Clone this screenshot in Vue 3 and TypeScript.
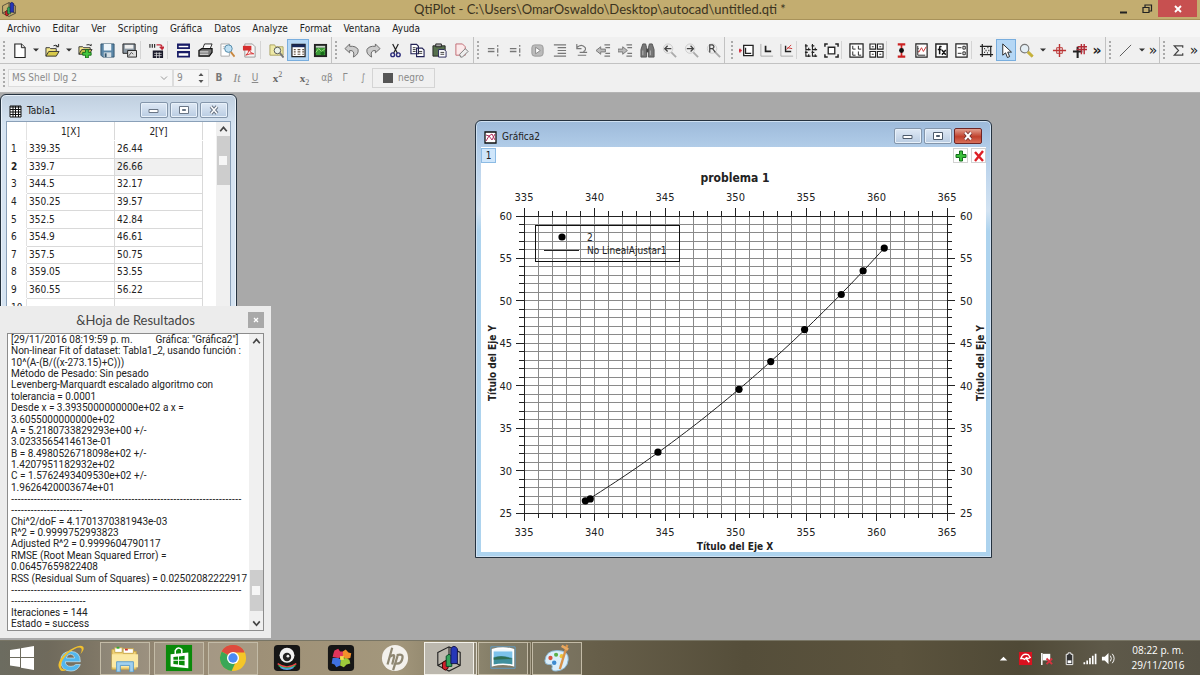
<script setup lang="ts">
import { ref } from 'vue'

interface Tool { id: string; label: string; kind?: 'sep' | 'drop' | 'more'; active?: boolean; disabled?: boolean }

const sep = (id: string): Tool => ({ id, label: '', kind: 'sep' })
const drop = (id: string, label: string): Tool => ({ id, label, kind: 'drop' })
const more = (id: string): Tool => ({ id, label: 'Más herramientas', kind: 'more' })
const tool = (id: string, label: string, active = false): Tool => ({ id, label, active })
const off = (id: string, label: string): Tool => ({ id, label, disabled: true })

const menus = ['Archivo', 'Editar', 'Ver', 'Scripting', 'Gráfica', 'Datos', 'Analyze', 'Format', 'Ventana', 'Ayuda']

const toolGroups: { name: string; tools: Tool[] }[] = [
  {
    name: 'file',
    tools: [
      tool('new', 'Nuevo'), drop('newMenu', 'Opciones de nuevo'), tool('open', 'Abrir'), drop('openMenu', 'Opciones de abrir'),
      tool('append', 'Añadir proyecto'), tool('save', 'Guardar'), tool('template', 'Guardar plantilla'), sep('s1'),
      tool('ascii', 'Importar ASCII'), sep('s2'), tool('duplicate', 'Duplicar'), tool('print', 'Imprimir'),
      tool('preview', 'Vista previa'), tool('pdf', 'Exportar PDF'), sep('s3'), tool('explorer', 'Explorador'),
      tool('results', 'Resultados', true), tool('log', 'Consola'),
    ],
  },
  {
    name: 'edit',
    tools: [
      tool('undo', 'Deshacer'), tool('redo', 'Rehacer'), tool('cut', 'Cortar'), tool('copy', 'Copiar'),
      tool('paste', 'Pegar'), tool('erase', 'Borrar'),
    ],
  },
  {
    name: 'script',
    tools: [
      off('eval', 'Ejecutar'), off('eval2', 'Evaluar'), off('play', 'Ejecutar todo'), off('indent', 'Formato'),
      off('revert', 'Revertir'), off('outdent', 'Reducir sangría'), off('inc', 'Aumentar sangría'), off('find', 'Buscar'),
      off('prev', 'Buscar anterior'), off('next', 'Buscar siguiente'), off('replace', 'Reemplazar'),
    ],
  },
  {
    name: 'plot',
    tools: [
      tool('layer', 'Añadir capa'), tool('axisA', 'Capa inferior'), tool('axisB', 'Capa superior'), sep('s4'),
      tool('arrange', 'Ordenar capas'), tool('extract', 'Extraer'), sep('s5'), tool('graphs', 'Capas'),
      tool('grid4', 'Gráficas'), sep('s6'), tool('errors', 'Barras de error'), tool('curve', 'Curva'),
      tool('fx', 'Función'), tool('legend', 'Leyenda'), sep('s7'), tool('rescale', 'Reescalar'),
      tool('pointer', 'Puntero', true), tool('zoom', 'Ampliar'), drop('zoomMenu', 'Opciones de zoom'),
      tool('cross', 'Lector de datos'), tool('range', 'Seleccionar rango'), more('m1'),
    ],
  },
  { name: 'line', tools: [off('line', 'Línea'), drop('lineMenu', 'Opciones de línea'), more('m2')] },
  { name: 'stat', tools: [off('sigma', 'Suma'), more('m3')] },
]

const G = '#777'
const lens = (c: string) => `<circle cx="6" cy="6" r="4.5" fill="#e4eef4" stroke="${c}" stroke-width="1.2"/><path d="M9.5 9.5l5 5" stroke="#b9a35a" stroke-width="2.4"/>`
const search = (glyph: string) => `<circle cx="6.5" cy="6" r="5" fill="#eee" stroke="#ccc"/><path d="M10 10l5 5" stroke="#aaa" stroke-width="2"/>${glyph}`
const corner = (x: number, y: number) => `<path d="M${x} ${y}v6h5M${x - 1} ${y + 2}h3M${x + 3} ${y + 4}v3" stroke="#222" fill="none" stroke-width="1.200"/>`

const icons: Record<string, string> = {
  new: '<path d="M3 1h7l4 4v10.500H3z" fill="#fff" stroke="#222" stroke-width="1.2"/><path d="M10 1v4h4" fill="#ddd" stroke="#222"/>',
  open: '<path d="M1 14V5h4l1 1h6v3" fill="#f5e88a" stroke="#333"/><path d="M1 14l3-5h11l-3 5z" fill="#d8ca4a" stroke="#333"/><path d="M9 3q3-2 5 1M14.500 1v3h-3" fill="none" stroke="#222"/>',
  append: '<path d="M1 12V4h4l1 1h7v3" fill="#f5e88a" stroke="#333"/><path d="M1 12l3-5h11l-3 5z" fill="#c9c34a" stroke="#333"/><path d="M9 2q3-1 5 1V1" fill="none" stroke="#222"/><path d="M8 7h3v3h3v3h-3v3H8v-3H5v-3h3z" fill="#43c83f" stroke="#176d19"/>',
  save: '<path d="M1 1h14v14H3l-2-2z" fill="#5b87a8" stroke="#31546e"/><path d="M4 1h8v7H4z" fill="#eef5fa"/><path d="M4 10h8v5H4z" fill="#d4dde3"/><path d="M5 11h2v4H5z" fill="#31546e"/>',
  template: '<path d="M1 1h13v10H1z" fill="#8b98a3" stroke="#222"/><path d="M3 2h9v4H3z" fill="#eee"/><path d="M6 8h9.500v7H6z" fill="#ddd" stroke="#222"/><path d="M7 14l3-4 2 2" stroke="#555" fill="none"/>',
  ascii: '<path d="M1 1v4M3.500 1v4M6 1v4" stroke="#222" stroke-width="1.200"/><path d="M8 2h4q2 0 2 4M11.500 4l2.500 2.500L16 4" fill="none" stroke="#c22736" stroke-width="1.500"/><path d="M4 8h11v8H4z" fill="#1a1a2a"/><path d="M5.500 11h8M5.500 13.500h8M8 10v6M11 10v6" stroke="#ddd" stroke-width=".8"/>',
  duplicate: '<path d="M2 1.500h12v4H2zM2 9.500h12v5H2z" fill="#fff" stroke="#181c66" stroke-width="1.800"/><path d="M2 2h12M2 10h12" stroke="#181c66" stroke-width="2"/>',
  print: '<path d="M5 6l2-5h8l-2 5" fill="#fff" stroke="#222"/><path d="M1 8l3-2h11v4l-3 4H1z" fill="#777" stroke="#111" stroke-width="1.300"/><path d="M2 9.500h9M2 12h9M7 3.500h5" stroke="#eee"/>',
  preview: '<path d="M1 1h9v13H1z" fill="#fff" stroke="#aaa"/><path d="M3 4h5M3 6h4" stroke="#bbb"/><circle cx="9" cy="6" r="4" fill="#bfe0f3" stroke="#4f87a8"/><path d="M11.500 9.500l4 5" stroke="#c8873e" stroke-width="2"/>',
  pdf: '<path d="M3 1h8l3 3v11H3z" fill="#f6f6f6" stroke="#999"/><path d="M1 3h9v5H1z" fill="#d62d2d"/><path d="M4 13q3-2 3.500-6 1 4 5 4.500-4-.5-8.500 1.500z" fill="none" stroke="#d62d2d"/>',
  explorer: '<path d="M1 13V2h5l1 2h8v9z" fill="#eee9a6" stroke="#aaa260"/><circle cx="9" cy="8" r="3.500" fill="#e9f1e9" stroke="#555"/><path d="M11.500 10.500l4 5" stroke="#777" stroke-width="2"/>',
  results: '<path d="M1 1.500h14v13H1z" fill="#fff" stroke="#222" stroke-width="1.300"/><path d="M1 3h14" stroke="#16285b" stroke-width="3"/><path d="M3 7h2M7 7h3M12 7h2M3 9.500h2M7 9.500h3M12 9.500h2M3 12h2M7 12h3M12 12h2" stroke="#654" stroke-width="1.200"/>',
  log: '<path d="M1 1h14v14H1z" fill="#222"/><path d="M3 5h10v8H3z" fill="#3b9b38"/><path d="M3 3h10v2H3z" fill="#c8d8c8"/><path d="M3 10l3-4 3 3 4-3" stroke="#9ae07a" fill="none"/><circle cx="10" cy="11" r="2" fill="#176d19"/>',
  undo: '<path d="M6 1L1 6l5 4.500V8q6-.5 4 7 6-3 5-8-2-4-9-3.500z" fill="#ccc" stroke="#666"/>',
  redo: '<path d="M10 1l5 5-5 4.500V8q-6-.5-4 7-6-3-5-8 2-4 9-3.500z" fill="#ccc" stroke="#666"/>',
  cut: '<path d="M5 1l5 10M11 1L6 11" stroke="#222" stroke-width="1.300"/><circle cx="5" cy="12.500" r="2" fill="none" stroke="#2a2a7a" stroke-width="1.500"/><circle cx="11" cy="12.500" r="2" fill="none" stroke="#2a2a7a" stroke-width="1.500"/>',
  copy: '<path d="M1 1.500h6l2 2v8H1zM7 5.500h6l2 2v7H7z" fill="#fff" stroke="#222255" stroke-width="1.200"/><path d="M3 5h3M3 7h3M3 9h3M9 9h4M9 11h4" stroke="#333"/>',
  paste: '<path d="M1 3h13v11H1z" fill="#56704d" stroke="#222"/><path d="M4 1h6v3H4z" fill="#aaa" stroke="#222"/><path d="M7 7h6l2 2v6H7z" fill="#fff" stroke="#222255"/><path d="M9 10h4M9 12h4" stroke="#333"/>',
  erase: '<path d="M2 1h7l3 3v9H2z" fill="#fbe9ea" stroke="#c06a72"/><path d="M6 12l6-6 3 3-6 6H7z" fill="#eee" stroke="#777"/>',
  eval: `<path d="M2 6h7M2 9h7" stroke="${G}" stroke-width="1.500"/><path d="M12.500 2v2M12.500 5.500v5M12.500 12v2" stroke="${G}" stroke-width="1.300"/>`,
  eval2: `<path d="M2 6h7M2 9h7" stroke="${G}" stroke-width="1.500"/><path d="M12.500 2v2M12.500 5.500v5M12.500 12v2" stroke="${G}" stroke-width="1.300"/>`,
  play: '<rect x="2" y="2" width="12" height="12" rx="3" fill="#bbb" stroke="#999"/><path d="M6 4.500l5 3.500-5 3.500z" fill="#fff" stroke="#888"/>',
  indent: `<path d="M2 2h13M6 5h9M6 8h9M6 11h9M2 14h13" stroke="${G}" stroke-width="1.300"/>`,
  revert: `<path d="M3 1v5h5M3 5q5-5 9 0 1 3-2 4M6 10h8M4 13h9" fill="none" stroke="${G}" stroke-width="1.200"/>`,
  outdent: `<path d="M9 2h6M10 5h5M10 11h5M9 14h6" stroke="${G}" stroke-width="1.300"/><path d="M0 8l5-4v2.500h5v3H5V12z" fill="#bbb" stroke="${G}"/>`,
  inc: `<path d="M9 2h6M10 5h5M10 11h5M9 14h6" stroke="${G}" stroke-width="1.300"/><path d="M10 8L5 4v2.500H0v3h5V12z" fill="#bbb" stroke="${G}"/>`,
  find: '<path d="M3 1h3l1 4v10H1V7zM10 1h3l2 6v8H9V5z" fill="#777" stroke="#555"/><path d="M7 6h2v4H7z" fill="#444"/><path d="M3 8v5M11 8v5" stroke="#bbb"/>',
  prev: search('<path d="M10 6H3M6 3L3 6l3 3" stroke="#444" fill="none" stroke-width="1.400"/>'),
  next: search('<path d="M3 6h7M7 3l3 3-3 3" stroke="#444" fill="none" stroke-width="1.400"/>'),
  replace: search('<path d="M4 10V2h3q3 2 0 4H4M7 6l3 4" stroke="#444" fill="none" stroke-width="1.300"/>'),
  layer: '<path d="M0 8h3M1 6v4" stroke="#d02a3a" stroke-width="1.700"/><path d="M5 2.500h10v11H5z" fill="#fff" stroke="#222" stroke-width="1.400"/><path d="M7 5v6h6" fill="none" stroke="#222" stroke-width="1.300"/>',
  axisA: '<path d="M2 1v13h13" stroke="#aaa" fill="none"/><path d="M7 3v6h6" stroke="#222" fill="none" stroke-width="1.800"/>',
  axisB: '<path d="M2 1v13h13" stroke="#aaa" fill="none"/><path d="M7 3v6h6" stroke="#222" fill="none" stroke-width="1.500"/><path d="M8 7l5-5M9 5l5 1" stroke="#c33"/>',
  arrange: corner(2, 1) + corner(9, 1) + corner(2, 8) + corner(9, 8),
  extract: '<path d="M4.500 4.500h7v7h-7z" fill="#fff" stroke="#222" stroke-width="1.400"/><path d="M1 4V1h3M12 1h3v3M1 12v3h3M12 15h3v-3" fill="none" stroke="#222" stroke-width="1.600"/>',
  graphs: '<path d="M1 1h14v14H1z" fill="#fff" stroke="#222" stroke-width="1.300"/><path d="M4 3v3.500h3M10 3v3.500h3M4 9v4h3M10 9v4h3" fill="none" stroke="#222"/>',
  grid4: '<path d="M1 1h6v5.500H1zM9 1h6v5.500H9zM1 9h6v6H1zM9 9h6v6H9z" fill="#fff" stroke="#222" stroke-width="1.200"/><path d="M3 4h2M11 4h2M3 12h2M11 12h2" fill="none" stroke="#222"/>',
  errors: '<path d="M4 1.500h8M4 14.500h8" stroke="#c22" stroke-width="2.400"/><path d="M8 2v12" stroke="#c22" stroke-width="1.800"/><circle cx="8" cy="8" r="2.600" fill="#111"/>',
  curve: '<path d="M2 1h12v14H2z" fill="#fff" stroke="#222" stroke-width="1.300"/><path d="M4 3v10h8M4 6h1M4 9h1" stroke="#222" fill="none"/><path d="M5 10l3-5 2 4 3-5" stroke="#c33" fill="none"/>',
  fx: '<path d="M2 1h12v14H2z" fill="#fff" stroke="#222" stroke-width="1.500"/><path d="M8 4q-2-1-2 1v7M4 7h4M8.500 7.500l4 5M12.500 7.500l-4 5" stroke="#111" fill="none" stroke-width="1.600"/>',
  legend: '<path d="M2 1h12v14H2z" fill="#fff" stroke="#222" stroke-width="1.300"/><path d="M4 5h4M4 11h4" stroke="#222"/><path d="M9.500 3.500h2.500v3H9.500zM9.500 9.500h2.500v3H9.500z" fill="none" stroke="#222"/>',
  rescale: '<path d="M3.500 1v14M1 3.500h13M12.500 3v12M1 12.500h14" stroke="#222" fill="none" stroke-width="1.300"/><path d="M5.500 6h1M9 5h1M7 8h1M10 8h1M5.500 10h1M8.500 10.500h1" stroke="#222" stroke-width="1.400"/>',
  pointer: '<path d="M4 1v12l3-2.500 2 5 2.300-1-2-4.800h4z" fill="#fff" stroke="#222"/>',
  zoom: lens('#777') + '<path d="M9.500 9.500l5 5" stroke="#c6b23a" stroke-width="3"/>',
  cross: '<path d="M8 1v14M1 8h14" stroke="#b33" stroke-width="1.500"/><path d="M5 5h6v6H5z" fill="none" stroke="#b33"/>',
  range: '<path d="M1 9h10M6 4v12" stroke="#222" stroke-width="2.200"/><path d="M5 7h11M10 1v11M13 1v11M6 4h10" stroke="#b22a35" stroke-width="1.500"/>',
  line: '<path d="M2 14L14 2" stroke="#555"/>',
  sigma: '<path d="M12.500 5V3h-9L8 8l-4.500 5h9v-2" fill="none" stroke="#444" stroke-width="1.300"/>',
}

const formats = [
  { id: 'b', text: 'B', label: 'Negrita' },
  { id: 'i', text: 'It', label: 'Cursiva' },
  { id: 'u', text: 'U', label: 'Subrayado' },
]
const symbols = [
  { text: 'αβ', label: 'Letras griegas' },
  { text: 'Γ', label: 'Mayúsculas griegas' },
  { text: '∫', label: 'Símbolos matemáticos' },
]

const font = ref('MS Shell Dlg 2')
const size = ref('9')

const data: [number, number][] = [
  [339.35, 26.44], [339.7, 26.66], [344.5, 32.17], [350.25, 39.57], [352.5, 42.84],
  [354.9, 46.61], [357.5, 50.75], [359.05, 53.55], [360.55, 56.22],
]
const rows: (number | '')[][] = [...data, ['', '']]
const currentRow = 2

const results = [
  '[29/11/2016 08:19:59 p. m.\u2003\u2003 Gráfica: "Gráfica2"]',
  'Non-linear Fit of dataset: Tabla1_2, usando función :',
  '10^(A-(B/((x-273.15)+C)))',
  'Método de Pesado: Sin pesado',
  'Levenberg-Marquardt escalado algoritmo con',
  'tolerancia = 0.0001',
  'Desde x = 3.3935000000000e+02 a x =',
  '3.6055000000000e+02',
  'A = 5.2180733829293e+00 +/-',
  '3.0233565414613e-01',
  'B = 8.4980526718098e+02 +/-',
  '1.4207951182932e+02',
  'C = 1.5762493409530e+02 +/-',
  '1.9626420003674e+01',
  '-'.repeat(71),
  '-'.repeat(22),
  'Chi^2/doF = 4.1701370381943e-03',
  'R^2 = 0.9999752993823',
  'Adjusted R^2 = 0.9999604790117',
  'RMSE (Root Mean Squared Error) =',
  '0.06457659822408',
  'RSS (Residual Sum of Squares) = 0.02502082222917',
  '-'.repeat(71),
  '-'.repeat(23),
  'Iteraciones = 144',
  'Estado = success',
]

// Plot geometry
const L = 43, R = 466, T = 69, B = 366
const px = (x: number) => L + ((x - 335) / 30) * (R - L)
const py = (y: number) => B - ((y - 25) / 35) * (B - T)
const snap = (v: number) => Math.floor(v) + 0.5
const xs = Array.from({ length: 31 }, (_, i) => 335 + i)
const ys = Array.from({ length: 36 }, (_, i) => 25 + i)
const gridPath = xs.map(x => `M${snap(px(x))} ${T}V${B}`).join('') + ys.map(y => `M${L} ${snap(py(y))}H${R}`).join('')
const tickLen = (v: number) => (v % 5 === 0 ? 8 : 5)
const tickPath =
  xs.map(x => `M${snap(px(x))} ${T}v${-tickLen(x)}M${snap(px(x))} ${B}v${tickLen(x)}`).join('') +
  ys.map(y => `M${L} ${snap(py(y))}h${-tickLen(y)}M${R} ${snap(py(y))}h${tickLen(y)}`).join('')
const fit = (x: number) => Math.pow(10, 5.2180733829293 - 849.80526718098 / (x - 273.15 + 157.6249340953))
const fitPoints = Array.from({ length: 60 }, (_, i) => 339.35 + (i * 21.2) / 59)
  .map(x => `${px(x).toFixed(1)},${py(fit(x)).toFixed(1)}`)
  .join(' ')
const xLabels = xs.filter(x => x % 5 === 0)
const yLabels = ys.filter(y => y % 5 === 0)

const apps = [
  { id: 'ie', label: 'Internet Explorer', state: '' },
  { id: 'folder', label: 'Explorador de archivos', state: 'open' },
  { id: 'store', label: 'Tienda', state: 'open' },
  { id: 'chrome', label: 'Google Chrome', state: 'open' },
  { id: 'cam', label: 'Cámara', state: '' },
  { id: 'puzzle', label: 'Complementos', state: '' },
  { id: 'hp', label: 'HP', state: '' },
  { id: 'qti', label: 'QtiPlot', state: 'current' },
  { id: 'photo', label: 'Fotos', state: 'open stacked' },
  { id: 'paint', label: 'Paint', state: 'open' },
]
const cube = '<path d="M3 9l12-6 12 6v14l-12 6-12-6zM15 3v13M3 23l12-7 12 7" fill="none" stroke="#222" stroke-width="1.200"/><path d="M8 20l3-2 3 2v6l-3 2-3-2z" fill="#d21f2b" stroke="#400"/><path d="M12 13l3-2 3 2v11h-6z" fill="#35a35a" stroke="#042"/><path d="M17 5q3-5 7 0v16h-7z" fill="#2637b8" stroke="#114"/>'
const appIcons: Record<string, string> = {
  ie: '<path d="M25 19H9q0 5 6 5 3 0 5-2h5q-3 7-10 7-11 0-11-11 0-10 11-10 10 0 10 11zM10 15h9q-1-4-4.500-4-4 0-4.500 4z" fill="#52b7ee" stroke="#cfeefc" stroke-width=".7"/><path d="M3 27Q-2 20 10 9 24-1 28 3q2 3-3 8 3-6 0-7-4-1-13 6Q2 20 5 26q2 2 6 1-6 4-8 0z" fill="#f2c12e"/>',
  folder: '<path d="M1 6h8l2 2h16v19H1z" fill="#f0d277" stroke="#c9a84a"/><path d="M4 4h8v5H4zM13 5h11v5H13z" fill="#fff" stroke="#c9a84a"/><path d="M6 4h3" stroke="#3a3" stroke-width="2"/><path d="M15 6h3" stroke="#c33" stroke-width="2"/><path d="M1 11h28v14H1z" fill="#fbe9a4"/><path d="M6 30V19h18v11h-4v-7H10v7z" fill="#9fd0ef" stroke="#5b9cc8"/>',
  store: '<path d="M1 1h28v28H1z" fill="#0a8a0a"/><path d="M6 11l19-2v17L6 24z" fill="#fff"/><path d="M11 11V7q3-5 7-1v4" fill="none" stroke="#fff" stroke-width="1.600"/><path d="M9 14l5-.6v3.600H9zM15 13.300l6-.7V17h-6zM9 18h5v4l-5-.6zM15 18h6v5l-6-.7z" fill="#0a8a0a"/>',
  chrome: '<circle cx="15" cy="15" r="14" fill="#f4c629"/><path d="M15 15L2.900 8A14 14 0 0 1 27.100 8H15z" fill="#dd4b3e"/><path d="M15 15L2.900 8A14 14 0 0 0 13.500 29L19 17z" fill="#3aa757"/><path d="M2.900 8A14 14 0 0 1 27.500 9H15z" fill="#dd4b3e"/><circle cx="15" cy="15" r="6.500" fill="#fff"/><circle cx="15" cy="15" r="5" fill="#4a8af4"/>',
  cam: '<rect x="1" y="1" width="28" height="28" rx="4" fill="#161616"/><circle cx="15" cy="12" r="8" fill="#f1f1f1"/><circle cx="15" cy="14" r="4.500" fill="#222"/><circle cx="16" cy="13" r="1.500" fill="#eee"/><path d="M5 21q10 7 20 0" stroke="#e44" fill="none" stroke-width="1.500"/><path d="M6 23q9 6 18 0" stroke="#4c7" fill="none" stroke-width="1.500"/><path d="M8 25q7 4 14 0" stroke="#59e" fill="none" stroke-width="1.500"/>',
  puzzle: '<rect x="1" y="1" width="28" height="28" rx="4" fill="#161616"/><path d="M8 7l4-2 2 3 4 0-1 6-5 1-6-1 1-4z" fill="#e0355c"/><path d="M17 8l3-2 3 3 3 1-1 5-4 1-4-2z" fill="#f2902b"/><path d="M6 15l6 0 3 2-1 6-4 2-2-3-3-1z" fill="#3f71e0"/><path d="M15 16l5-1 4 2 1 4-4 1-3 3-4-2z" fill="#9cc93a"/><path d="M14 13h4v4h-4z" fill="#f4e04a"/>',
  hp: '<circle cx="15" cy="15" r="14" fill="#f3f1ec"/><path d="M12 4L7 22M9 14q6-4 5 0l-2 8M18 12l-5 16M17 12q7-2 6 3-1 7-8 6" fill="none" stroke="#8f8873" stroke-width="2.400"/>',
  qti: cube,
  photo: '<path d="M2 3h26v23H2z" fill="none" stroke="#5d9cc8"/><path d="M4 6q11-3 22 0v17q-11-3-22 0z" fill="#eef7fb" stroke="#fff" stroke-width="2"/><path d="M5 8h20v7H5z" fill="#7cc2ea"/><path d="M5 14q10-2 20 1v7q-10-2-20 0z" fill="#3f8f9d"/><path d="M5 15q8-4 20 1l-20 1z" fill="#2f6e52"/>',
  paint: '<path d="M2 18Q3 7 15 7q13 0 12 10-1 11-13 12-6 0-4-5 0-3-4-2-4 0-4-4z" fill="#dbeefa" stroke="#8ab9d8"/><circle cx="8" cy="15" r="2.300" fill="#d9533c"/><circle cx="14" cy="11.500" r="2.200" fill="#5ab04a"/><circle cx="20" cy="13" r="2.200" fill="#eec53a"/><circle cx="12" cy="20" r="2.400" fill="#3e8bd0"/><path d="M26 1l-8 26" stroke="#d8924a" stroke-width="2.500"/><path d="M20 2l7 4" stroke="#e9a860" stroke-width="3"/>',
}
const tray = [
  { id: 'up', w: 26, label: 'Mostrar iconos ocultos', svg: '<path d="M4 10l4-4 4 4z" fill="#fff"/>' },
  { id: 'avira', w: 18, label: 'Antivirus', svg: '<path d="M1 1h14v14H1z" fill="#d9121f"/><path d="M3 8q2-6 8-4l2 3-2 1-2-1-2 2-2-1zM8 7l4 5" stroke="#fff" fill="none" stroke-width="1.400"/>' },
  { id: 'flag', w: 24, label: 'Centro de actividades', svg: '<path d="M3 2v13" stroke="#fff" stroke-width="1.600"/><path d="M4 3h8v7H4z" fill="#fff"/><path d="M8 8l6 6M14 8l-6 6" stroke="#d9323f" stroke-width="2"/>' },
  { id: 'battery', w: 22, label: 'Batería', svg: '<path d="M6.500 2h3v1.500h2v11h-7v-11h2z" fill="#333" stroke="#fff"/><path d="M6 10h4v3H6z" fill="#fff"/>' },
  { id: 'signal', w: 18, label: 'Red', svg: '<path d="M2.500 12v2M5.500 10v4M8.500 7.500V14M11.500 5v9M14.500 3v11" stroke="#fff" stroke-width="1.800"/>' },
  { id: 'volume', w: 20, label: 'Volumen', svg: '<path d="M1 6h3l4-4v12l-4-4H1z" fill="#fff"/><path d="M10 5q2 3 0 6M12 3q4 5 0 10" fill="none" stroke="#fff"/>' },
]
</script>

<template>
  <div class="desktop">
    <header class="titlebar">
      <svg class="logo" viewBox="0 0 30 30" aria-hidden="true" v-html="cube"></svg>
      <h1>QtiPlot - C:\Users\OmarOswaldo\Desktop\autocad\untitled.qti *</h1>
      <div class="sys">
        <button aria-label="Minimizar"><svg viewBox="0 0 12 12"><path d="M2 9.500h7" stroke="#222" stroke-width="2" /></svg></button>
        <button aria-label="Restaurar"><svg viewBox="0 0 12 12"><path d="M2 4.500h6v5H2zM4 4V2h6.500v6H8" fill="none" stroke="#222" stroke-width="1.200" /></svg></button>
        <button class="close" aria-label="Cerrar"><svg viewBox="0 0 12 12"><path d="M3 3l6 6M9 3l-6 6" stroke="#fff" stroke-width="1.900" /></svg></button>
      </div>
    </header>

    <nav class="menubar">
      <button v-for="m in menus" :key="m">{{ m }}</button>
    </nav>

    <div class="toolbars">
      <div v-for="g in toolGroups" :key="g.name" class="group" :class="g.name">
        <span class="grip"></span>
        <template v-for="t in g.tools" :key="t.id">
          <span v-if="t.kind === 'sep'" class="sep"></span>
          <button v-else-if="t.kind === 'drop'" class="drop" :aria-label="t.label"><svg viewBox="0 0 8 8"><path d="M1 2.500h6l-3 3z" fill="#333" /></svg></button>
          <button v-else-if="t.kind === 'more'" class="more" :aria-label="t.label">»</button>
          <button v-else class="tool" :class="{ active: t.active }" :disabled="t.disabled" :aria-label="t.label">
            <svg viewBox="0 0 16 16" fill="none" v-html="icons[t.id]"></svg>
          </button>
        </template>
      </div>
    </div>

    <div class="formatbar">
      <span class="grip"></span>
      <div class="combo">
        <select v-model="font" aria-label="Fuente" disabled><option>MS Shell Dlg 2</option></select>
        <svg viewBox="0 0 8 8"><path d="M1 2.500l3 3 3-3" fill="none" stroke="#999" /></svg>
      </div>
      <div class="spin">
        <input v-model="size" aria-label="Tamaño" disabled />
        <svg viewBox="0 0 8 14"><path d="M1.500 5L4 2l2.500 3zM1.500 9L4 12l2.500-3z" fill="#555" /></svg>
      </div>
      <button v-for="f in formats" :key="f.id" class="fmt" :class="f.id" :aria-label="f.label" disabled>{{ f.text }}</button>
      <button class="fmt script" aria-label="Superíndice" disabled>x<sup>2</sup></button>
      <button class="fmt script" aria-label="Subíndice" disabled>x<sub>2</sub></button>
      <button v-for="s in symbols" :key="s.text" class="fmt sym" :aria-label="s.label" disabled>{{ s.text }}</button>
      <button class="color" disabled><span class="swatch"></span>negro</button>
    </div>

    <main class="workspace">
      <section class="win table-win">
        <div class="caption">
          <svg viewBox="0 0 13 13"><path d="M1 1h11v11H1z" fill="#fff" stroke="#111" /><path d="M1 2h11M1 4.500h11M1 7h11M1 9.500h11M4 1v11M6.500 1v11M9.500 1v11" stroke="#111" /></svg>
          <h2>Tabla1</h2>
          <div class="wbtns">
            <button aria-label="Minimizar tabla"><svg viewBox="0 0 14 10"><path d="M2 4.500h9v3H2z" fill="#fff" stroke="#6a7686" /></svg></button>
            <button aria-label="Maximizar tabla"><svg viewBox="0 0 14 10"><path d="M2.500 1.500h9v7h-9z" fill="#fff" stroke="#6a7686" /><path d="M5.500 4.500h3v1h-3z" fill="#6a7686" stroke="#6a7686" /></svg></button>
            <button aria-label="Cerrar tabla"><svg viewBox="0 0 14 10"><path d="M4 1.500l6 7M10 1.500l-6 7" stroke="#6a7686" stroke-width="3.500" /><path d="M4 1.500l6 7M10 1.500l-6 7" stroke="#fff" stroke-width="1.500" /></svg></button>
          </div>
        </div>
        <div class="pane table-pane">
          <table>
            <colgroup><col class="c-num" /><col class="c-val" /><col class="c-val" /><col /></colgroup>
            <thead><tr><th class="num"></th><th>1[X]</th><th>2[Y]</th><th class="rest"></th></tr></thead>
            <tbody>
              <tr v-for="(r, i) in rows" :key="i" :class="{ current: i + 1 === currentRow }">
                <th class="num" scope="row">{{ i + 1 }}</th>
                <td>{{ r[0] }}</td>
                <td>{{ r[1] }}</td>
                <td class="rest"></td>
              </tr>
            </tbody>
          </table>
          <div class="scroll">
            <svg viewBox="0 0 10 10"><path d="M2 7l3-3.500L8 7" fill="none" stroke="#444" stroke-width="1.500" /></svg>
            <div class="thumb"><i></i></div>
          </div>
        </div>
      </section>

      <section class="win graph-win">
        <div class="caption">
          <svg viewBox="0 0 13 13"><path d="M1 1h11v11H1z" fill="#fff" stroke="#111" stroke-width="1.300" /><path d="M2 10l3-5 3 4 3-6M2 4l3 1 3-2 3 6" fill="none" stroke="#b0305e" /></svg>
          <h2>Gráfica2</h2>
          <div class="wbtns">
            <button aria-label="Minimizar gráfica"><svg viewBox="0 0 14 10"><path d="M2 4.500h9v3H2z" fill="#fff" stroke="#4c5a6b" /></svg></button>
            <button aria-label="Maximizar gráfica"><svg viewBox="0 0 14 10"><path d="M2.500 1.500h9v7h-9z" fill="#fff" stroke="#4c5a6b" /><path d="M5.500 4.500h3v1h-3z" fill="#4c5a6b" stroke="#4c5a6b" /></svg></button>
            <button class="red" aria-label="Cerrar gráfica"><svg viewBox="0 0 14 10"><path d="M4 1.500l6 7M10 1.500l-6 7" stroke="#6b2a2a" stroke-width="3.500" /><path d="M4 1.500l6 7M10 1.500l-6 7" stroke="#fff" stroke-width="2" /></svg></button>
          </div>
        </div>
        <div class="pane graph-pane">
          <div class="layers">
            <button class="layer">1</button>
            <button class="mini" aria-label="Añadir capa nueva"><svg viewBox="0 0 12 12"><path d="M4.500 1h3v3.500H11v3H7.500V11h-3V7.500H1v-3h3.500z" fill="#3cc13c" stroke="#156e1c" /></svg></button>
            <button class="mini" aria-label="Eliminar capa"><svg viewBox="0 0 12 12"><path d="M2 2l8 9M10 1L2 11" stroke="#dd1f26" stroke-width="2.400" /></svg></button>
          </div>
          <svg class="plot" viewBox="0 0 505 405" role="img" aria-label="problema 1">
            <path :d="gridPath" stroke="#8a8a8a" fill="none" />
            <path :d="tickPath" stroke="#222" fill="none" />
            <rect :x="L + 0.5" :y="T + 0.5" :width="R - L" :height="B - T" fill="none" stroke="#222" />
            <text class="head" x="254" y="35">problema 1</text>
            <g v-for="x in xLabels" :key="x">
              <text class="mid" :x="px(x)" y="54">{{ x }}</text>
              <text class="mid" :x="px(x)" y="389">{{ x }}</text>
            </g>
            <g v-for="y in yLabels" :key="y">
              <text class="end" x="31" :y="py(y) + 4">{{ y }}</text>
              <text x="479" :y="py(y) + 4">{{ y }}</text>
            </g>
            <text class="axis" x="254" y="403">Título del Eje X</text>
            <text class="axis" transform="translate(15 216) rotate(-90)">Título del Eje Y</text>
            <text class="axis" transform="translate(503 216) rotate(-90)">Título del Eje Y</text>
            <polyline :points="fitPoints" fill="none" stroke="#222" />
            <circle v-for="p in data" :key="p[0]" :cx="px(p[0])" :cy="py(p[1])" r="3.600" />
            <rect x="54.5" y="78.5" width="144" height="36" fill="none" stroke="#111" />
            <circle cx="81" cy="90" r="3.600" />
            <path d="M63 103.500h35" stroke="#222" />
            <text class="key" x="106" y="94">2</text>
            <text class="key" x="106" y="107">No LinealAjustar1</text>
          </svg>
        </div>
      </section>

      <aside class="dock">
        <div class="dock-head">
          <h2>&amp;Hoja de Resultados</h2>
          <button aria-label="Cerrar resultados"><svg viewBox="0 0 10 10"><path d="M3 3l4 4M7 3L3 7" stroke="#fff" stroke-width="1.300" /></svg></button>
        </div>
        <div class="log">
          <div class="lines">
            <p v-for="(line, i) in results" :key="i" :class="{ rule: line.startsWith('---') }">{{ line }}</p>
          </div>
          <div class="scroll">
            <svg viewBox="0 0 10 10"><path d="M2 7l3-3.500L8 7" fill="none" stroke="#444" stroke-width="1.500" /></svg>
            <div class="thumb low"><i></i></div>
            <svg viewBox="0 0 10 10"><path d="M2 3.500L5 7l3-3.500" fill="none" stroke="#444" stroke-width="1.500" /></svg>
          </div>
        </div>
      </aside>
    </main>

    <footer class="taskbar">
      <button class="start" aria-label="Inicio"><svg viewBox="0 0 26 26"><path d="M1 5l10-1.500V12H1zM12 3.300L25 1v11H12zM1 13h10v9L1 20.500zM12 13h13v12l-13-2.300z" fill="#fff" /></svg></button>
      <button v-for="a in apps" :key="a.id" class="app" :class="a.state" :aria-label="a.label">
        <svg viewBox="0 0 30 30" v-html="appIcons[a.id]"></svg>
      </button>
      <div class="tray">
        <button v-for="t in tray" :key="t.id" :aria-label="t.label" :style="{ width: t.w + 'px' }"><svg viewBox="0 0 16 16" v-html="t.svg"></svg></button>
        <div class="clock"><time>08:22 p. m.</time><time>29/11/2016</time></div>
      </div>
    </footer>
  </div>
</template>

<style>
body { margin: 0; }
</style>

<style scoped>
* { box-sizing: border-box; }
button { font: inherit; color: inherit; background: none; border: 0; padding: 0; margin: 0; display: flex; align-items: center; justify-content: center; }
h1, h2, p { margin: 0; font-weight: normal; }
h2 { font-size: 10px; }
svg { display: block; }

.desktop { display: flex; flex-direction: column; height: 100vh; min-height: 600px; overflow: hidden; font: 10px/12px "DejaVu Sans Condensed", "DejaVu Sans", sans-serif; color: #222; background: #a9a9a9; }

.titlebar { display: grid; grid-template-columns: 108px 1fr 108px; height: 20px; background: #c3ad70; border-bottom: 1px solid #a8925a; }
.logo { width: 16px; height: 16px; margin: 1px; }
h1 { font: 13px/19px Lato, "Open Sans", sans-serif; text-align: center; color: #3b3320; white-space: nowrap; }
.sys { display: flex; justify-content: flex-end; padding-right: 3px; }
.sys button { width: 23px; height: 17px; }
.sys .close { width: 39px; background: #c75050; }
.sys svg { width: 12px; height: 12px; }

.menubar { display: flex; gap: 12px; height: 17px; padding-left: 7px; background: #f6f6f6; }

.toolbars { display: flex; height: 27px; background: #f0f0f0; border-bottom: 1px solid #c2c2c2; }
.group { display: flex; align-items: center; flex: none; border-right: 1px solid #c2c2c2; }
.group.stat { flex: 1; border-right: 0; }
.grip { flex: none; width: 8px; height: 20px; background: radial-gradient(circle at 4px 2px, #aaa 1px, transparent 1px) 0 0 / 8px 4px; }
.tool { width: 22px; height: 22px; }
.tool svg { width: 15px; height: 15px; }
.tool.active { background: #b5d7f5; border: 1px solid #79aede; }
.sep { width: 5px; height: 18px; border-left: 1px solid #d4d4d4; }
.drop { width: 11px; height: 20px; }
.drop svg { width: 8px; height: 8px; }
.more { width: 16px; height: 20px; font: bold 14px/16px "DejaVu Sans", sans-serif; }
.plot > .tool { width: 20px; }
.plot > .drop { width: 13px; }
.group.plot { padding-left: 3px; }
.group.edit { padding-right: 1px; }
.line > .more, .stat > .more { width: 12px; font-weight: normal; }
.stat > .tool { width: 20px; }

.formatbar { display: flex; align-items: center; height: 29px; background: #f0f0f0; border-bottom: 1px solid #b4b4b4; color: #8a8a8a; }
.combo, .spin { display: flex; align-items: center; height: 18px; border: 1px solid #dcdcdc; background: #f6f6f6; }
.combo { width: 165px; padding-right: 4px; }
.combo svg { width: 8px; height: 8px; }
.spin { width: 36px; padding-right: 3px; }
.spin svg { width: 8px; height: 14px; }
.combo select, .spin input { appearance: none; flex: 1; min-width: 0; border: 0; padding: 0 3px; background: none; font: inherit; color: #8a8a8a; opacity: 1; }
.fmt { width: 18px; height: 20px; }
.fmt.b { font-weight: bold; margin-left: 1px; color: #777; }
.fmt.i { font-family: "Liberation Serif", serif; font-style: italic; font-size: 12px; }
.fmt.u { text-decoration: underline; }
.fmt.script { display: block; width: 27px; font: bold 11px/20px "Liberation Serif", serif; color: #666; }
.fmt.script sup, .fmt.script sub { font-size: 8px; line-height: 8px; font-weight: normal; }
.color { width: 63px; height: 20px; gap: 5px; border: 1px solid #d4d4d4; }
.swatch { width: 10px; height: 10px; background: #555; }

.workspace { position: relative; flex: 1; overflow: hidden; background: #a9a9a9; }
.win { position: absolute; display: flex; flex-direction: column; border: 1px solid #25323f; border-radius: 6px 6px 0 0; padding: 0 5px 5px; box-shadow: inset 0 0 0 1px #eaf2fa; }
.caption { display: flex; align-items: center; flex: none; height: 26px; padding: 6px 0 0 3px; gap: 5px; }
.caption > svg { width: 13px; height: 13px; }
.caption h2 { flex: 1; }
.wbtns { display: flex; gap: 2px; margin-bottom: 3px; }
.wbtns button { width: 28px; height: 16px; border: 1px solid #8496ab; border-radius: 2px; background: linear-gradient(#dfe9f5, #b9cce2); box-shadow: inset 0 0 0 1px #e8f1fa; }
.wbtns svg { width: 14px; height: 10px; }
.wbtns .red { border-color: #6e2626; background: linear-gradient(#e2a090, #c0402c 55%, #d8705a); box-shadow: none; }
.pane { background: #fff; flex: 1; min-height: 0; }

.table-win { left: 0; top: 1px; width: 237px; height: 300px; background: linear-gradient(#c0cfdf, #d6e4f2 30px); }
.table-win .wbtns { margin-right: 3px; }
.table-pane { display: flex; border: 1px solid #8aa0b8; border-bottom: 0; overflow: hidden; }
table { flex: 1; border-collapse: collapse; table-layout: fixed; height: 195px; }
.c-num { width: 19px; }
.c-val { width: 88px; }
th, td { height: 17px; padding: 0 2px; border: 1px solid #d9d9d9; text-align: left; font-weight: normal; line-height: 12px; }
thead th { border-color: #fff #d9d9d9 #fff #e8e8e8; text-align: center; height: 18px; }
.num { padding-left: 3px; border-color: #fff #e2e2e2 #fff #fff; }
.rest { border-color: #fff; }
thead .rest { border-left-color: #d9d9d9; }
.current .num { font-weight: bold; }
.current td:nth-child(3) { background: #f0f0f0; }
.scroll { display: flex; flex-direction: column; align-items: center; flex: none; width: 14px; background: #f0f0f0; }
.scroll svg { width: 11px; height: 14px; }
.thumb { display: flex; align-items: center; justify-content: center; width: 13px; height: 49px; background: #cdcdcd; }
.thumb i { width: 8px; height: 9px; background: #f6f6f6; }
.thumb.low { height: 41px; margin-top: auto; margin-bottom: 5px; }

.graph-win { left: 475px; top: 27px; width: 517px; height: 438px; background: linear-gradient(#9dbada, #b4cfea 30px, #d3e3f2 90px, #add3ee 110px); box-shadow: inset 0 0 0 1px #cfe1f2; }
.graph-win .wbtns { margin-right: 4px; }
.graph-pane { position: relative; }
.layers { position: absolute; top: 1px; left: 0; right: 0; display: flex; gap: 3px; }
.layer, .mini { width: 15px; height: 15px; border: 1px solid #d2d2d2; }
.layer { margin-right: auto; background: #cfe6fb; border-color: #8cbbe4; }
.mini svg { width: 12px; height: 12px; }
svg.plot { width: 100%; }
svg.plot text { font-size: 11px; fill: #222; }
svg.plot .mid, svg.plot .axis, svg.plot .head { text-anchor: middle; }
svg.plot .end { text-anchor: end; }
svg.plot .axis { font-weight: bold; font-size: 10px; }
svg.plot .head { font-weight: bold; font-size: 12px; }
svg.plot .key { font-size: 10px; }

.dock { position: absolute; left: 0; top: 213px; width: 271px; height: 332px; display: flex; flex-direction: column; padding: 0 7px 7px; background: #ececec; }
.dock-head { display: flex; align-items: center; height: 27px; flex: none; }
.dock-head h2 { flex: 1; padding-left: 16px; text-align: center; font: 13px/16px Lato, "Open Sans", sans-serif; color: #444; }
.dock-head button { width: 16px; height: 16px; background: #a9a9a9; }
.dock-head svg { width: 10px; height: 10px; }
.log { display: flex; flex: 1; min-height: 0; background: #fff; border: 1px solid #8c8c8c; }
.lines { flex: 1; min-width: 0; display: flex; flex-direction: column; justify-content: space-between; padding: 0 0 1px 3px; overflow: hidden; white-space: pre; font-family: Roboto, "Liberation Sans", sans-serif; }
.lines p { line-height: 11px; }
.lines .rule { font-family: "DejaVu Sans Condensed", "DejaVu Sans", sans-serif; }

.taskbar { display: flex; align-items: center; height: 35px; flex: none; background: linear-gradient(90deg, #6c6c60, #6f6a5c 4%, #978a75 14%, #a09278 24%, #a3977c 33%, #736c54 42%, #665e49 50%, #554e3a 62%, #5b533d 75%, #4f4936 85%, #5e5949 92%, #575346); border-top: 1px solid #787565; }
.start { width: 44px; height: 34px; }
.start svg { width: 26px; height: 26px; }
.app { width: 50px; height: 33px; margin: 0 2px; border: 1px solid transparent; }
.app svg { width: 28px; height: 28px; }
.app.open { border-color: #c3bba7; background: rgba(255, 255, 255, .1); }
.app.current { border-color: #f3f1ea; background: #bcb8ae; box-shadow: 3px 0 0 -1px #8b8472, 3px 0 0 #ddd8cb; }
.app.stacked { box-shadow: 3px 0 0 -1px #6f6853, 3px 0 0 #aaa28d; }
.tray { display: flex; align-items: center; margin-left: auto; color: #fff; }
.tray svg { width: 15px; height: 15px; }
.clock { display: flex; flex-direction: column; align-items: center; width: 82px; padding-right: 2px; font: 10px/15px "Open Sans", "Noto Sans", sans-serif; }
</style>
